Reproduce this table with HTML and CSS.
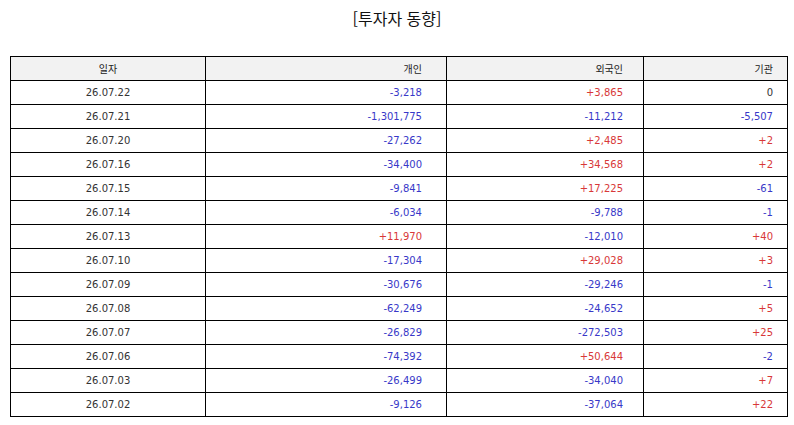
FILE: index.html
```html
<!DOCTYPE html>
<html lang="ko">
<head>
<meta charset="utf-8">
<title>투자자 동향</title>
<link rel="stylesheet" href="styles.css">
</head>
<body>
<h1 class="title">[투자자 동향]</h1>
<table class="grid">
  <colgroup>
    <col class="c-date"><col class="c-ind"><col class="c-for"><col class="c-inst">
  </colgroup>
  <thead>
    <tr><th class="date">일자</th><th class="ind">개인</th><th class="for">외국인</th><th class="inst">기관</th></tr>
  </thead>
  <tbody>
    <tr><td class="date">26.07.22</td><td class="ind dn">-3,218</td><td class="for up">+3,865</td><td class="inst">0</td></tr>
    <tr><td class="date">26.07.21</td><td class="ind dn">-1,301,775</td><td class="for dn">-11,212</td><td class="inst dn">-5,507</td></tr>
    <tr><td class="date">26.07.20</td><td class="ind dn">-27,262</td><td class="for up">+2,485</td><td class="inst up">+2</td></tr>
    <tr><td class="date">26.07.16</td><td class="ind dn">-34,400</td><td class="for up">+34,568</td><td class="inst up">+2</td></tr>
    <tr><td class="date">26.07.15</td><td class="ind dn">-9,841</td><td class="for up">+17,225</td><td class="inst dn">-61</td></tr>
    <tr><td class="date">26.07.14</td><td class="ind dn">-6,034</td><td class="for dn">-9,788</td><td class="inst dn">-1</td></tr>
    <tr><td class="date">26.07.13</td><td class="ind up">+11,970</td><td class="for dn">-12,010</td><td class="inst up">+40</td></tr>
    <tr><td class="date">26.07.10</td><td class="ind dn">-17,304</td><td class="for up">+29,028</td><td class="inst up">+3</td></tr>
    <tr><td class="date">26.07.09</td><td class="ind dn">-30,676</td><td class="for dn">-29,246</td><td class="inst dn">-1</td></tr>
    <tr><td class="date">26.07.08</td><td class="ind dn">-62,249</td><td class="for dn">-24,652</td><td class="inst up">+5</td></tr>
    <tr><td class="date">26.07.07</td><td class="ind dn">-26,829</td><td class="for dn">-272,503</td><td class="inst up">+25</td></tr>
    <tr><td class="date">26.07.06</td><td class="ind dn">-74,392</td><td class="for up">+50,644</td><td class="inst dn">-2</td></tr>
    <tr><td class="date">26.07.03</td><td class="ind dn">-26,499</td><td class="for dn">-34,040</td><td class="inst up">+7</td></tr>
    <tr><td class="date">26.07.02</td><td class="ind dn">-9,126</td><td class="for dn">-37,064</td><td class="inst up">+22</td></tr>
  </tbody>
</table>
</body>
</html>
```
FILE: styles.css
```css
html, body {
  margin: 0;
  padding: 0;
  background: #ffffff;
}
body {
  font-family: "DejaVu Sans", "Noto Sans CJK KR", sans-serif;
  color: #333333;
}
.title {
  margin: 0;
  padding-top: 8px;
  font-family: "Noto Sans CJK KR", sans-serif;
  font-size: 16px;
  line-height: 20px;
  font-weight: normal;
  text-align: center;
  color: #111111;
}
.grid {
  margin: 28px 0 0 10px;
  width: 777px;
  border-collapse: collapse;
  table-layout: fixed;
  font-size: 10px;
}
.c-date { width: 195px; }
.c-ind { width: 241px; }
.c-for { width: 197px; }
.c-inst { width: 144px; }
.grid th, .grid td {
  border: 1px solid #000000;
  height: 23px;
  padding: 0;
  line-height: 14px;
  font-weight: normal;
}
.grid th {
  background: #f2f2f2;
  font-family: "Noto Sans CJK KR", sans-serif;
  font-size: 10px;
  color: #222222;
}
.date { text-align: center; }
.ind { text-align: right; padding-right: 24px !important; }
.for { text-align: right; padding-right: 20px !important; }
.inst { text-align: right; padding-right: 14px !important; }
.dn { color: #3838c8; }
.up { color: #d83838; }
```
